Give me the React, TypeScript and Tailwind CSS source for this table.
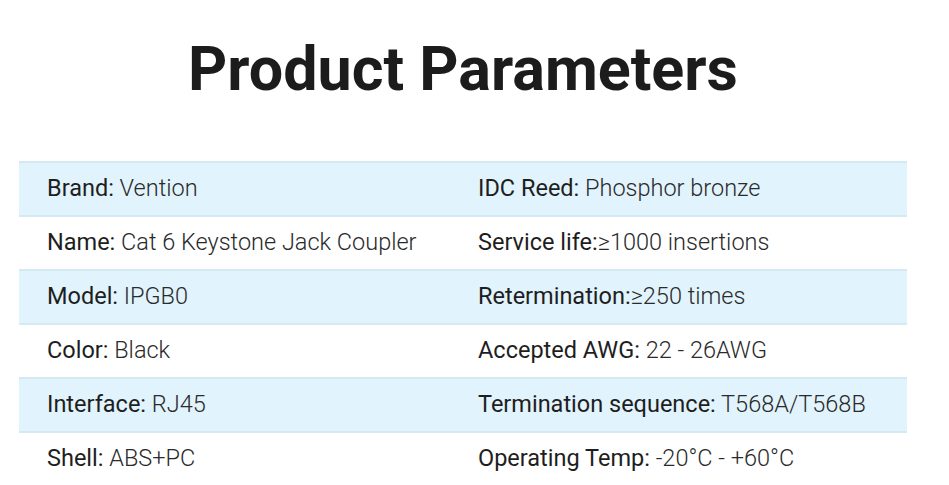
import React from "react";

const rows: [string, string, string, string][] = [
  ["Brand:", " Vention", "IDC Reed:", " Phosphor bronze"],
  ["Name:", " Cat 6 Keystone Jack Coupler", "Service life:", "≥1000 insertions"],
  ["Model:", " IPGB0", "Retermination:", "≥250 times"],
  ["Color:", " Black", "Accepted AWG:", " 22 - 26AWG"],
  ["Interface:", " RJ45", "Termination sequence:", " T568A/T568B"],
  ["Shell:", " ABS+PC", "Operating Temp:", " -20°C - +60°C"],
];

export default function App() {
  return (
    <div className="w-[949px] h-[485px] bg-white overflow-hidden" style={{ fontFamily: "Roboto, 'Noto Sans', sans-serif" }}>
      <div className="w-[888px] ml-[19px]">
        <h1 className="text-center font-bold text-[61px] leading-none text-[#1c1c1c] pt-[39px] h-[161px]">
          Product Parameters
        </h1>
        <div className="border-b-2 border-[#d4e9f2]">
          {rows.map((r, i) => (
            <div
              key={i}
              className={`grid grid-cols-[431px_1fr] h-[54px] items-center border-t-2 border-[#d4e9f2] text-[23.5px] ${i % 2 === 0 ? "bg-[#e1f3fc]" : "bg-white"}`}
            >
              <div className="pl-[28px] text-[#1e1e1e]">
                <span className="font-normal">{r[0]}</span>
                <span className="font-light text-[#2a2a2a]">{r[1]}</span>
              </div>
              <div className="pl-[28px] text-[#1e1e1e]">
                <span className="font-normal">{r[2]}</span>
                <span className="font-light text-[#2a2a2a]">{r[3]}</span>
              </div>
            </div>
          ))}
        </div>
      </div>
    </div>
  );
}
